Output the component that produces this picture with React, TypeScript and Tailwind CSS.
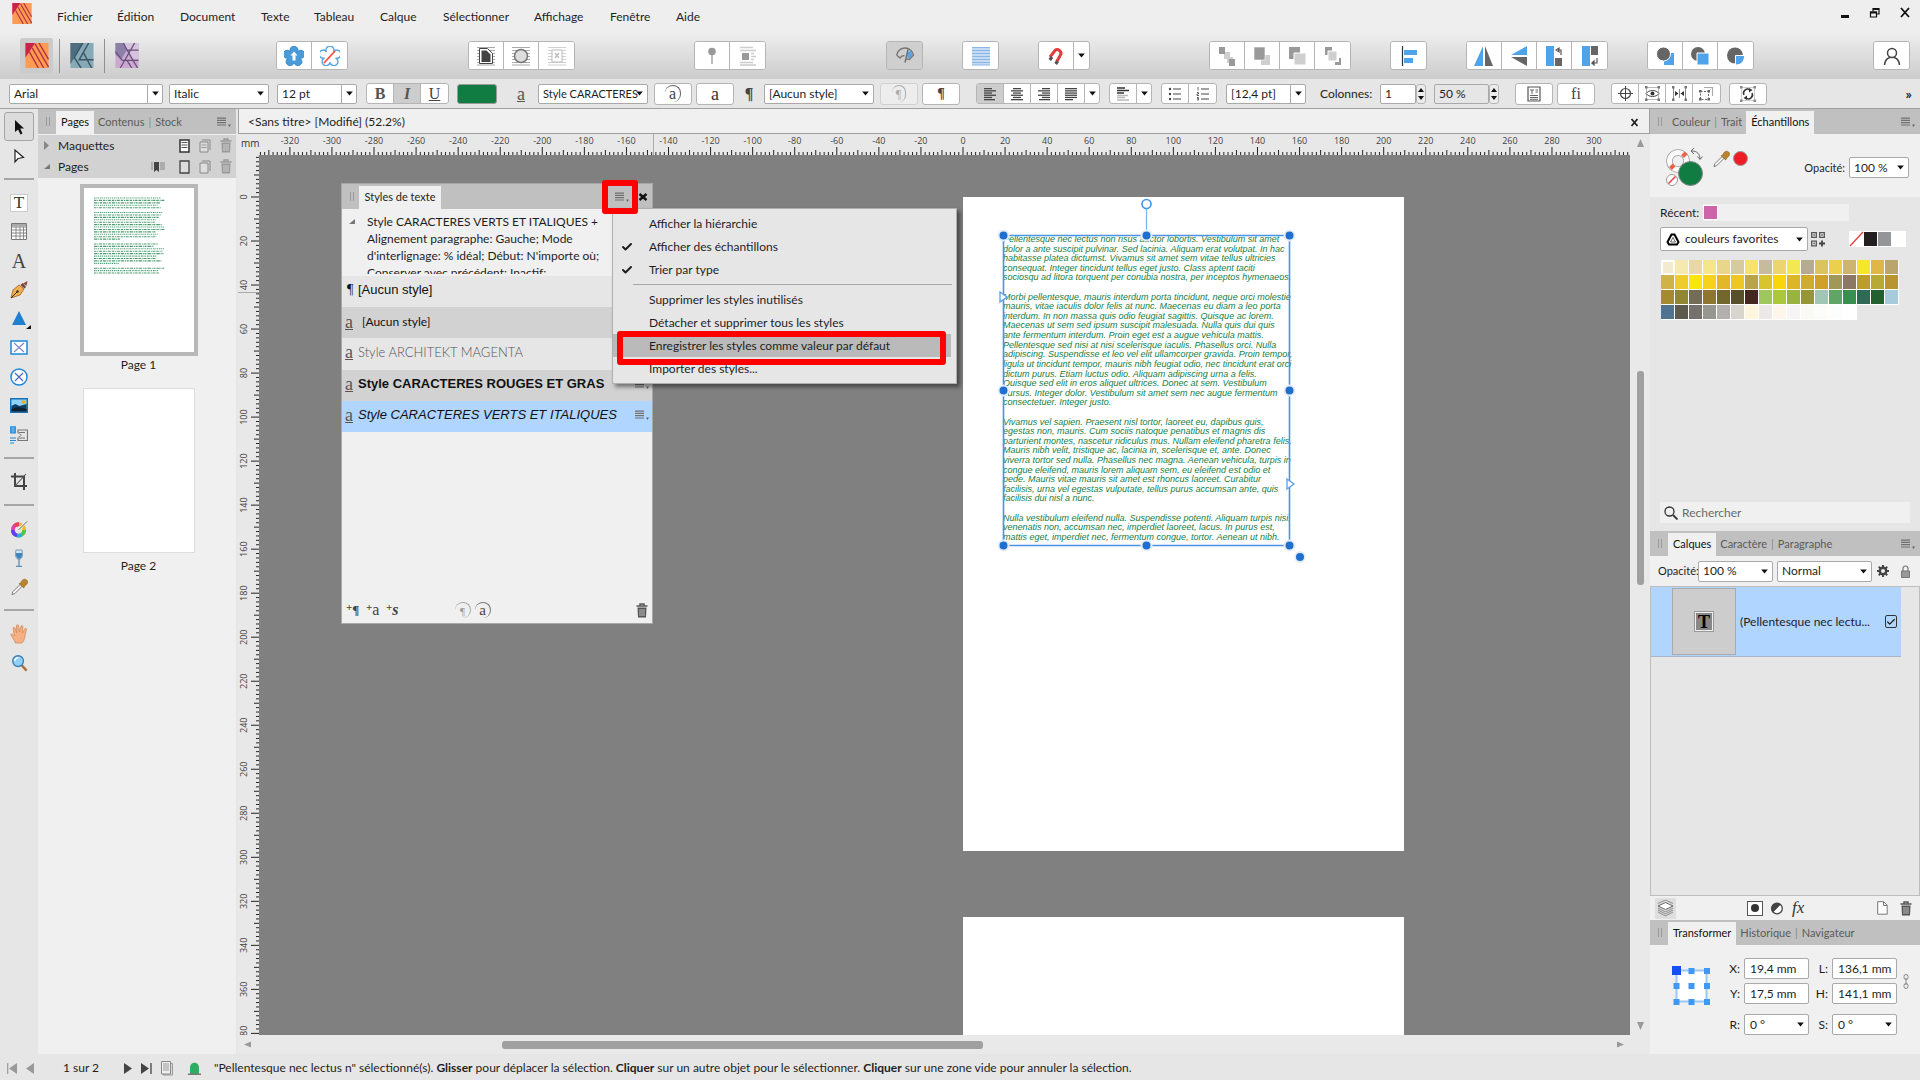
import type { ReactNode } from "react";
import { clsx } from "clsx";
import { Check } from "lucide-react";

const MENUS = [
  { label: "Fichier", width: "w-[60px]" },
  { label: "Édition", width: "w-[63px]" },
  { label: "Document", width: "w-[81px]" },
  { label: "Texte", width: "w-[53px]" },
  { label: "Tableau", width: "w-[66px]" },
  { label: "Calque", width: "w-[63px]" },
  { label: "Sélectionner", width: "w-[91px]" },
  { label: "Affichage", width: "w-[76px]" },
  { label: "Fenêtre", width: "w-[66px]" },
  { label: "Aide", width: "w-[40px]" },
];

const TEXT_LINES = [
  "Pellentesque nec lectus non risus auctor lobortis. Vestibulum sit amet",
  "dolor a ante suscipit pulvinar. Sed lacinia. Aliquam erat volutpat. In hac",
  "habitasse platea dictumst. Vivamus sit amet sem vitae tellus ultricies",
  "consequat. Integer tincidunt tellus eget justo. Class aptent taciti",
  "sociosqu ad litora torquent per conubia nostra, per inceptos hymenaeos.",
  "",
  "Morbi pellentesque, mauris interdum porta tincidunt, neque orci molestie",
  "mauris, vitae iaculis dolor felis at nunc. Maecenas eu diam a leo porta",
  "interdum. In non massa quis odio feugiat sagittis. Quisque ac lorem.",
  "Maecenas ut sem sed ipsum suscipit malesuada. Nulla quis dui quis",
  "ante fermentum interdum. Proin eget est a augue vehicula mattis.",
  "Pellentesque sed nisi at nisi scelerisque iaculis. Phasellus orci. Nulla",
  "adipiscing. Suspendisse et leo vel elit ullamcorper gravida. Proin tempor,",
  "ligula ut tincidunt tempor, mauris nibh feugiat odio, nec tincidunt erat orci",
  "dictum purus. Etiam luctus odio. Aliquam adipiscing urna a felis.",
  "Quisque sed elit in eros aliquet ultrices. Donec at sem. Vestibulum",
  "cursus. Integer dolor. Vestibulum sit amet sem nec augue fermentum",
  "consectetuer. Integer justo.",
  "",
  "Vivamus vel sapien. Praesent nisl tortor, laoreet eu, dapibus quis,",
  "egestas non, mauris. Cum sociis natoque penatibus et magnis dis",
  "parturient montes, nascetur ridiculus mus. Nullam eleifend pharetra felis.",
  "Mauris nibh velit, tristique ac, lacinia in, scelerisque et, ante. Donec",
  "viverra tortor sed nulla. Phasellus nec magna. Aenean vehicula, turpis in",
  "congue eleifend, mauris lorem aliquam sem, eu eleifend est odio et",
  "pede. Mauris vitae mauris sit amet est rhoncus laoreet. Curabitur",
  "facilisis, urna vel egestas vulputate, tellus purus accumsan ante, quis",
  "facilisis dui nisl a nunc.",
  "",
  "Nulla vestibulum eleifend nulla. Suspendisse potenti. Aliquam turpis nisi,",
  "venenatis non, accumsan nec, imperdiet laoreet, lacus. In purus est,",
  "mattis eget, imperdiet nec, fermentum congue, tortor. Aenean ut nibh.",
];

const SWATCHES = [
  "#f3ead0", "#f5e9b0", "#e8d8a8", "#f5e68c", "#ead68a", "#d6cb9e", "#f5e36c", "#c8ba9c", "#ecd56e", "#f4e850", "#b5ab90", "#dbc45e", "#ead04c", "#cdb570", "#f6e62c", "#dfb748", "#baa66c",
  "#d0b348", "#edcc2c", "#f8e60c", "#f6d21a", "#e2b728", "#edc722", "#b8a44a", "#d8c42c", "#f8d60c", "#dab628", "#d0ac2c", "#cfa02a", "#a09858", "#8c7664", "#ba9c30", "#b8a834", "#b8952e",
  "#a68a30", "#918632", "#746c54", "#8e7630", "#72682c", "#58502a", "#44281e", "#a0c75e", "#aac83a", "#98b33e", "#969638", "#a0c6b4", "#60a566", "#388f50", "#2e6a54", "#226030", "#a8cbdc",
  "#50748f", "#5c5a4c", "#76706c", "#969790", "#b4b0ae", "#d8d5d0", "#fbf6dc", "#ece8e8", "#fef6ea", "#f6f4f5", "#f9faf4", "#fdfcfa", "#fdfdfd", "#ffffff",
];

function Caret({ className }: { className?: string }) {
  return (
    <svg viewBox="0 0 8 6" className={clsx("h-[5px] w-[7px] shrink-0", className)} aria-hidden="true">
      <path d="M0 0.5h8L4 5.5z" fill="#111" />
    </svg>
  );
}

function Select({ label, value, className }: { label: string; value: string; className: string }) {
  return (
    <div className={clsx("relative flex items-center rounded-[2px] border border-[#a9a9a9] bg-white", className)}>
      <select aria-label={label} className="h-full w-full appearance-none truncate bg-transparent pl-1 outline-none">
        <option>{value}</option>
      </select>
      <Caret className="pointer-events-none absolute right-1" />
    </div>
  );
}

function Combo({ label, value, className }: { label: string; value: string; className: string }) {
  return (
    <div className={clsx("flex h-5 overflow-hidden rounded-[2px] border border-[#a9a9a9] bg-white", className)}>
      <input aria-label={label} defaultValue={value} className="min-w-0 flex-1 pl-1 outline-none" />
      <button aria-label={`${label} : liste`} className="flex w-[15px] items-center justify-center border-l border-[#a9a9a9]">
        <Caret />
      </button>
    </div>
  );
}

function Stepper({ label, value, muted }: { label: string; value: string; muted?: boolean }) {
  return (
    <div className="flex h-5">
      <input
        aria-label={label}
        defaultValue={value}
        className={clsx("rounded-[2px] border border-[#a9a9a9] pl-1 outline-none", muted ? "w-[55px] bg-[#e6e6e6]" : "w-9 bg-white")}
      />
      <button aria-label={`${label} : ajuster`} className="flex w-[10px] flex-col items-center justify-center gap-1 rounded-[3px] border border-[#b5b5b5] bg-[#ececec]">
        <svg viewBox="0 0 6 12" className="h-3 w-[6px]" aria-hidden="true">
          <path d="M0 4l3-4 3 4zM0 8l3 4 3-4z" fill="#111" />
        </svg>
      </button>
    </div>
  );
}

function Group({ children, className }: { children: ReactNode; className?: string }) {
  return (
    <div className={clsx("flex divide-x divide-[#b5b5b5] overflow-hidden rounded-[3px] border border-[#b5b5b5] bg-white", className)}>
      {children}
    </div>
  );
}

function BigButton({ label, active, children }: { label: string; active?: boolean; children: ReactNode }) {
  return (
    <button aria-label={label} className={clsx("flex h-[27px] w-[35px] items-center justify-center", active ? "bg-[#cfcfcf]" : "bg-white")}>
      {children}
    </button>
  );
}

function SmallButton({ label, active, children }: { label: string; active?: boolean; children: ReactNode }) {
  return (
    <button aria-label={label} className={clsx("flex h-[19px] w-[27px] items-center justify-center", active && "bg-[#cdcdcd]")}>
      {children}
    </button>
  );
}

function BoxButton({ label, faded, children }: { label: string; faded?: boolean; children: ReactNode }) {
  return (
    <button
      aria-label={label}
      className={clsx("flex h-[22px] w-[38px] items-center justify-center rounded-[3px] border", faded ? "border-[#d0d0d0] bg-[#ededed]" : "border-[#b5b5b5] bg-white")}
    >
      {children}
    </button>
  );
}

function Icon({ size = "h-5 w-5", box = "0 0 20 20", children }: { size?: string; box?: string; children: ReactNode }) {
  return (
    <svg viewBox={box} className={clsx("shrink-0", size)} fill="none" aria-hidden="true">
      {children}
    </svg>
  );
}

function PublisherLogo({ size }: { size: string }) {
  return (
    <Icon size={size} box="0 0 24 26">
      <path d="M0 0h24v26H0z" fill="#fd9a54" />
      <path d="M0 0h10L0 15z" fill="#c9234c" />
      <path d="M4 9l9.500 17M7 5l12 21M10 1l14 24M14 0l10 17" stroke="#b5313f" strokeWidth="1.400" />
    </Icon>
  );
}

function DesignerLogo() {
  return (
    <Icon size="h-[25px] w-6" box="0 0 24 26">
      <path d="M0 0h24v26H0z" fill="#86abb6" />
      <path d="M0 0h13L0 22z" fill="#4f6d80" />
      <path d="M13 0L4 15l7 11M19 0L9 17.500h15M13.500 10L22 26" stroke="#3c5665" strokeWidth="1.500" />
    </Icon>
  );
}

function PhotoLogo() {
  return (
    <Icon size="h-[25px] w-6" box="0 0 24 26">
      <path d="M0 0h24v26H0z" fill="#cba8d0" />
      <path d="M9 0h15v17l-6-1L12 7z" fill="#d6c3de" />
      <path d="M0 0h9l3 7-6 10-6-5z" fill="#8c7fa8" />
      <path d="M8 0l10 17.500L23 26M20 0L5 26M0 9l7 9h17M12 18l5 8M12 7.500h12" stroke="#65507a" strokeWidth="1.300" />
    </Icon>
  );
}

function PanelMenu() {
  return (
    <button aria-label="Menu du panneau" className="flex h-4 w-4 items-center justify-center">
      <Icon size="h-3 w-4" box="0 0 16 12">
        <path d="M1 1.500h9v1.200H1zM1 3.800h9V5H1zM1 6.100h9v1.200H1zM1 8.400h9v1.200H1z" fill="#707070" />
        <path d="M12 8.500h3l-1.500 2.500z" fill="#666" />
      </Icon>
    </button>
  );
}

function Grip() {
  return <span className="mb-2 ml-2 h-[9px] w-1 border-x border-[#9a9a9a]" />;
}

function PanelTabs({ tabs, active, menu = true }: { tabs: string[]; active: string; menu?: boolean }) {
  return (
    <div className="flex h-[25px] shrink-0 items-end bg-[#c0c0c0] text-[11px] text-[#5a5a5a]">
      <Grip />
      <div className="ml-[6px] flex h-[23px] flex-1">
        {tabs.map((tab, i) => (
          <div key={tab} className="flex items-center">
            {i > 0 && tab !== active && tabs[i - 1] !== active && <span className="pb-[2px] text-[#8a8a8a]">|</span>}
            <button className={clsx("h-full pb-[2px]", tab === active ? "bg-[#f0f0f0] px-[5px] text-[#111]" : "px-1")}>{tab}</button>
          </div>
        ))}
      </div>
      {menu && (
        <div className="mr-1 self-center">
          <PanelMenu />
        </div>
      )}
    </div>
  );
}

function TrashIcon({ color = "#555" }: { color?: string }) {
  return (
    <Icon size="h-[15px] w-3" box="0 0 12 15">
      <path d="M0.500 3h11M4 2.500V1h4v1.500" stroke={color} strokeWidth="1.400" />
      <path d="M1.500 4.500h9l-.5 10H2z" fill={color} />
      <path d="M4 6v7M6 6v7M8 6v7" stroke="#ddd" strokeWidth="0.8" />
    </Icon>
  );
}

function MenuBar() {
  return (
    <header className="flex h-[33px] shrink-0 items-center bg-[#eeeeee] pl-3">
      <div className="flex w-[45px] self-start pt-[3px]">
        <PublisherLogo size="h-[21px] w-5" />
      </div>
      <nav className="flex flex-1">
        {MENUS.map((m) => (
          <button key={m.label} className={clsx("text-left whitespace-nowrap", m.width)}>
            {m.label}
          </button>
        ))}
      </nav>
      <div className="flex gap-[18px] self-start pt-[7px] pr-[9px]">
        <button aria-label="Réduire">
          <Icon size="h-3 w-3" box="0 0 12 12"><path d="M2 8h8v3H2z" fill="#111" /></Icon>
        </button>
        <button aria-label="Restaurer">
          <Icon size="h-3 w-3" box="0 0 12 12">
            <path d="M4 4V1.500h6V7H8M1.500 5h6v5h-6z" stroke="#111" strokeWidth="1.200" />
            <path d="M4 1h6v2H4zM1 4.500h7v2H1z" fill="#111" />
          </Icon>
        </button>
        <button aria-label="Fermer">
          <Icon size="h-3 w-3" box="0 0 12 12"><path d="M2 1l8 9M10 1L2 10" stroke="#111" strokeWidth="1.800" /></Icon>
        </button>
      </div>
    </header>
  );
}

function ToolBar() {
  return (
    <div className="flex h-[46px] shrink-0 items-center bg-gradient-to-b from-[#eeeeee] to-[#cccccc] pr-[10px] pb-px pl-5">
      <button aria-label="Publisher" className="flex h-[35px] w-[33px] items-center justify-center rounded-[3px] bg-[#cbcbcb]">
        <PublisherLogo size="h-[25px] w-6" />
      </button>
      <span className="ml-[6px] h-[34px] w-px bg-[#909090]" />
      <button aria-label="Designer" className="mx-[10px]"><DesignerLogo /></button>
      <span className="h-[34px] w-px bg-[#909090]" />
      <button aria-label="Photo" className="ml-[10px]"><PhotoLogo /></button>

      <Group className="ml-[137px]">
        <BigButton label="Par défaut">
          <Icon>
            <path d="M6.500 6a4 4 0 1 1 7 0 4 4 0 1 1 2 6 4 4 0 1 1-5.500 4.500A4 4 0 1 1 4.500 12a4 4 0 1 1 2-6z" fill="#4a9bd8" stroke="#3f8fcf" />
            <path d="M10 5.500l3.500 4h-2v5h-3v-5h-2z" fill="#fff" />
          </Icon>
        </BigButton>
        <BigButton label="Rétablir">
          <Icon>
            <path d="M6.500 6a4 4 0 1 1 7 0 4 4 0 1 1 2 6 4 4 0 1 1-5.500 4.500A4 4 0 1 1 4.500 12a4 4 0 1 1 2-6z" fill="#fff" stroke="#5aa5da" strokeWidth="1.400" />
            <path d="M4 17L15 5" stroke="#f0503c" strokeWidth="1.800" />
          </Icon>
        </BigButton>
      </Group>

      <Group className="ml-[120px]">
        <BigButton label="Habillage du contour">
          <Icon>
            <path d="M1 1.500h18M1 4.500h18M1 7.500h18M1 10.500h18M1 13.500h18M1 16.500h18M1 19h18" stroke="#aaa" />
            <path d="M3.500 2.500h8l5 5v10h-13z" fill="#fff" stroke="#444" />
            <path d="M5.500 4.500h5l4 4V16h-9z" fill="#444" />
          </Icon>
        </BigButton>
        <BigButton label="Habillage ovale">
          <Icon>
            <path d="M1 1.500h18M1 4.500h18M1 7.500h18M1 10.500h18M1 13.500h18M1 16.500h18M1 19h18" stroke="#aaa" />
            <circle cx="10" cy="10" r="6.500" fill="#ddd" stroke="#777" strokeWidth="1.500" />
          </Icon>
        </BigButton>
        <BigButton label="Sans habillage">
          <Icon>
            <path d="M1 1.500h18M1 4.500h18M1 7.500h18M1 10.500h18M1 13.500h18M1 16.500h18M1 19h18" stroke="#d0d0d0" />
            <path d="M5 4h10v12H5z" fill="#fff" stroke="#bbb" />
            <path d="M8 7l4 5M12 7l-4 5" stroke="#bbb" strokeWidth="1.300" />
          </Icon>
        </BigButton>
      </Group>

      <Group className="ml-[119px]">
        <BigButton label="Épingler">
          <Icon>
            <circle cx="10" cy="5.500" r="3.800" fill="#999" />
            <path d="M10 9v9" stroke="#999" strokeWidth="1.300" />
          </Icon>
        </BigButton>
        <BigButton label="Incorporer au texte">
          <Icon>
            <path d="M2 1.500h13M2 4.500h16M13 7.500h3M13 10.500h5M13 13.500h3M2 16.500h13M2 19h16" stroke="#ccc" strokeWidth="1.300" />
            <path d="M4 7h7v7H4z" fill="#999" />
          </Icon>
        </BigButton>
      </Group>

      <Group className="ml-[120px]">
        <BigButton label="Aperçu" active>
          <Icon>
            <path d="M1.500 9C3 4 6.500 2 10 2s7 2 8.500 7l-4 4.500-3-.5M1.500 9l3.500 3c1-1.500 2.500-2.500 4.500-2.500" stroke="#777" strokeWidth="1.400" />
            <path d="M12 7l4-3 1.500 5-3 3.500-2-.5z" fill="#5ba3df" />
            <path d="M13 3.500l-3 13" stroke="#666" strokeWidth="1.300" />
          </Icon>
        </BigButton>
      </Group>
      <Group className="ml-[39px]">
        <BigButton label="Grille de ligne de base">
          <Icon>
            <path d="M1 1h18v18H1z" fill="#c5daf3" />
            <path d="M1 1.500h18M1 4.500h18M1 7.500h18M1 10.500h18M1 13.500h18M1 16.500h18M1 19h18" stroke="#8cb6e6" />
          </Icon>
        </BigButton>
      </Group>
      <Group className="ml-[39px]">
        <BigButton label="Magnétisme">
          <Icon>
            <path d="M4 11l5-6.500c2.500-2.500 7.500 1 5.500 4.500L10.500 16" stroke="#e8393c" strokeWidth="3" />
            <path d="M2.500 13l2.200-3 2.600 2-2.300 3zM8.500 17l1.700-2.700 2.800 1.700-2 3z" fill="#555" />
          </Icon>
        </BigButton>
        <button aria-label="Options de magnétisme" className="flex w-[15px] items-center justify-center"><Caret /></button>
      </Group>

      <Group className="ml-[119px]">
        <BigButton label="Mettre en arrière-plan">
          <Icon><path d="M7 6h6v5h3v6h-6v-4H7z" fill="#cfcfcf" /><path d="M2 1h6v7H2zM12 13h6v7h-6z" fill="#999" /></Icon>
        </BigButton>
        <BigButton label="Reculer">
          <Icon><path d="M9 9h9v10H9z" fill="#cfcfcf" /><path d="M2 1h11v13H2z" fill="#999" stroke="#fff" strokeWidth="0.6" /></Icon>
        </BigButton>
        <BigButton label="Avancer">
          <Icon><path d="M2 1h11v12H2z" fill="#999" /><path d="M7 7h12v12H7z" fill="#cfcfcf" stroke="#fff" /></Icon>
        </BigButton>
        <BigButton label="Mettre au premier plan">
          <Icon><path d="M2 1h7v4H6v4H2zM12 19h6v-7h-2v4h-4z" fill="#999" /><path d="M5 5h9v10H5z" fill="#cfcfcf" stroke="#fff" /></Icon>
        </BigButton>
      </Group>

      <Group className="ml-[39px]">
        <BigButton label="Aligner">
          <Icon><path d="M3.500 0v20" stroke="#333" strokeWidth="1.200" /><path d="M5 4h13v5H5zM5 12h9v5H5z" fill="#4fa3ea" /></Icon>
        </BigButton>
      </Group>

      <Group className="ml-[39px]">
        <BigButton label="Retourner horizontalement">
          <Icon><path d="M9 0v20H0z" fill="#4fa3ea" /><path d="M11 0v20h8z" fill="#666" /></Icon>
        </BigButton>
        <BigButton label="Retourner verticalement">
          <Icon><path d="M18 0v9H2z" fill="#4fa3ea" /><path d="M18 20v-9H2z" fill="#666" /></Icon>
        </BigButton>
        <BigButton label="Pivoter à gauche">
          <Icon><path d="M2 0h8v20H2z" fill="#4fa3ea" /><path d="M11 12h7v8h-7z" fill="#666" /><path d="M12 4l3-2v4zM14 4h3v5" stroke="#555" strokeWidth="1.200" /></Icon>
        </BigButton>
        <BigButton label="Pivoter à droite">
          <Icon><path d="M2 0h8v20H2z" fill="#4fa3ea" /><path d="M11 0h7v9h-7z" fill="#666" /><path d="M17 12v5h-5l2-2v4l-2-2" stroke="#555" strokeWidth="1.200" /></Icon>
        </BigButton>
      </Group>

      <Group className="ml-[39px]">
        <BigButton label="Ajouter">
          <Icon><path d="M9 7h10v12H9z" fill="#4fa3ea" /><circle cx="8.500" cy="8" r="7" fill="#666" stroke="#fff" /></Icon>
        </BigButton>
        <BigButton label="Soustraire">
          <Icon><circle cx="8" cy="8" r="7" fill="#666" /><path d="M7 7h12v12H7z" fill="#4fa3ea" stroke="#fff" /></Icon>
        </BigButton>
        <BigButton label="Intersection">
          <Icon><circle cx="9" cy="9.500" r="8" fill="#666" /><path d="M9.500 9.500h9c0 6-3 9.500-9 9.500z" fill="#4fa3ea" stroke="#fff" /></Icon>
        </BigButton>
      </Group>

      <Group className="ml-auto">
        <BigButton label="Mon compte">
          <Icon><circle cx="10" cy="7" r="4.500" stroke="#444" strokeWidth="1.500" /><path d="M2.500 19c.5-5 3-7 5.500-7.500M17.500 19c-.5-5-3-7-5.500-7.500" stroke="#444" strokeWidth="1.500" /></Icon>
        </BigButton>
      </Group>
    </div>
  );
}

function AlignIcon({ widths, center, right }: { widths: number[]; center?: boolean; right?: boolean }) {
  return (
    <Icon size="h-[14px] w-[14px]" box="0 0 14 14">
      {widths.map((w, i) => (
        <rect key={i} x={center ? 7 - w / 2 : right ? 13 - w : 1} y={1 + i * 2.2} width={w} height="1.3" fill="#444" />
      ))}
    </Icon>
  );
}

function Divider() {
  return <span className="h-[22px] w-px shrink-0 bg-[#8c8c8c]" />;
}

function ContextBar() {
  return (
    <div className="flex h-[30px] shrink-0 items-center border-b border-[#a0a0a0] bg-[#e6e6e6] pr-2 pl-[9px] whitespace-nowrap">
      <Combo label="Police" value="Arial" className="w-[154px]" />
      <Select label="Style de police" value="Italic" className="ml-[6px] h-5 w-[100px]" />
      <Combo label="Taille" value="12 pt" className="ml-2 w-20" />
      <Group className="ml-[9px]">
        <SmallButton label="Gras"><span className="font-['Liberation_Serif',serif] text-[16px] font-bold text-[#555]">B</span></SmallButton>
        <SmallButton label="Italique" active><span className="font-['Liberation_Serif',serif] text-[16px] font-bold text-[#555] italic">I</span></SmallButton>
        <SmallButton label="Souligné"><span className="font-['Liberation_Serif',serif] text-[16px] text-[#444] underline">U</span></SmallButton>
      </Group>
      <button aria-label="Couleur du texte" className="ml-2 h-5 w-10 rounded-[3px] border border-[#9a9a9a] bg-[#107c41]" />
      <div className="mx-2"><Divider /></div>
      <span className="w-[25px] pl-1 font-['Liberation_Serif',serif] text-[18px] leading-5 text-[#555] underline">a</span>
      <Select label="Style de caractère" value="Style CARACTERES" className="h-5 w-[110px] text-[11px]" />
      <div className="ml-[6px] flex gap-1">
        <BoxButton label="Actualiser le style de caractère">
          <span className="rounded-full border-t border-r border-[#666] px-1 font-['Liberation_Serif',serif] text-[16px] leading-4 text-[#444]">a</span>
        </BoxButton>
        <BoxButton label="Réinitialiser le style de caractère"><span className="font-['Liberation_Serif',serif] text-[18px] text-[#333]">a</span></BoxButton>
      </div>
      <span className="w-[30px] text-center font-['Liberation_Serif',serif] text-[16px] font-bold text-[#444]">¶</span>
      <Select label="Style de paragraphe" value="[Aucun style]" className="h-5 w-[110px]" />
      <div className="ml-[6px] flex gap-1">
        <BoxButton label="Actualiser le style de paragraphe" faded>
          <span className="rounded-full border-t border-r border-[#aaa] px-1 font-['Liberation_Serif',serif] text-[12px] leading-4 text-[#aaa]">¶</span>
        </BoxButton>
        <BoxButton label="Réinitialiser le style de paragraphe"><span className="font-['Liberation_Serif',serif] text-[14px] font-bold text-[#444]">¶</span></BoxButton>
      </div>
      <div className="mr-[10px] ml-[6px]"><Divider /></div>
      <Group>
        <SmallButton label="Aligner à gauche" active><AlignIcon widths={[8, 12, 8, 12, 8, 11]} /></SmallButton>
        <SmallButton label="Centrer"><AlignIcon widths={[8, 12, 8, 12, 8, 12]} center /></SmallButton>
        <SmallButton label="Aligner à droite"><AlignIcon widths={[8, 12, 8, 12, 8, 11]} right /></SmallButton>
        <SmallButton label="Justifier"><AlignIcon widths={[12, 12, 12, 12, 12, 8]} /></SmallButton>
        <button aria-label="Options de justification" className="flex w-[14px] items-center justify-center"><Caret /></button>
      </Group>
      <Group className="ml-[9px]">
        <SmallButton label="Alignement vertical">
          <Icon size="h-[14px] w-[14px]" box="0 0 14 14">
            <path d="M1 1h8M1 3.500h12M1 6h7" stroke="#333" strokeWidth="1.300" />
            <path d="M1 8.500h11M1 10.500h8M1 13h12" stroke="#bbb" strokeWidth="1.300" />
          </Icon>
        </SmallButton>
        <button aria-label="Options d'alignement" className="flex w-[14px] items-center justify-center"><Caret /></button>
      </Group>
      <Group className="ml-[9px]">
        <SmallButton label="Puces">
          <Icon size="h-[14px] w-[14px]" box="0 0 14 14">
            <path d="M5 2h8M5 7h8M5 12h8" stroke="#444" strokeWidth="1.200" />
            <circle cx="2" cy="2" r="1.200" fill="#444" /><circle cx="2" cy="7" r="1.200" fill="#444" /><circle cx="2" cy="12" r="1.200" fill="#444" />
          </Icon>
        </SmallButton>
        <SmallButton label="Numérotation">
          <Icon size="h-[14px] w-[14px]" box="0 0 14 14">
            <path d="M5 2h8M5 7h8M5 12h8" stroke="#444" strokeWidth="1.200" />
            <path d="M2 0v3.500M1 5.500h1.500v1.500H1v1.500h2M1 10.500h1.500V13H1M1 11.700h1.500" stroke="#444" strokeWidth="0.8" />
          </Icon>
        </SmallButton>
      </Group>
      <Combo label="Interlignage" value="[12,4 pt]" className="ml-[9px] w-20" />
      <div className="mx-[7px]"><Divider /></div>
      <span className="w-[60px]">Colonnes:</span>
      <Stepper label="Colonnes" value="1" />
      <span className="w-2" />
      <Stepper label="Gouttière" value="50 %" muted />
      <div className="mr-[7px] ml-[9px]"><Divider /></div>
      <div className="flex gap-1">
        <BoxButton label="Cadre de texte">
          <Icon size="h-4 w-[14px]" box="0 0 14 16">
            <path d="M1 1h12v14H1z" stroke="#555" strokeWidth="1.200" />
            <path d="M3 4h4M5 4v4M8.500 4H11M8.500 6H11M3 9.500h8M3 11.500h8M3 13.300h8" stroke="#666" />
          </Icon>
        </BoxButton>
        <BoxButton label="Typographie"><span className="font-['Liberation_Serif',serif] text-[16px] text-[#444]">fi</span></BoxButton>
      </div>
      <div className="mr-[10px] ml-[6px]"><Divider /></div>
      <Group>
        <SmallButton label="Origine">
          <Icon size="h-[15px] w-[15px]" box="0 0 15 15"><circle cx="7.500" cy="7.500" r="5" stroke="#444" strokeWidth="1.200" /><path d="M7.500 0v15M0 7.500h15" stroke="#444" /></Icon>
        </SmallButton>
        <SmallButton label="Masquer la sélection">
          <Icon size="h-[15px] w-[15px]" box="0 0 15 15"><path d="M1.500 1.500h12v12h-12z" stroke="#bbb" /><path d="M0 0h2.500v2.500H0zM12.500 0H15v2.500h-2.500zM0 12.500h2.500V15H0zM12.500 12.500H15V15h-2.500z" fill="#777" /><path d="M1 7.500C4 3.500 11 3.500 14 7.500c-3 4-10 4-13 0z" fill="#fff" stroke="#444" /><circle cx="7.500" cy="7.500" r="2" fill="#333" /></Icon>
        </SmallButton>
        <SmallButton label="Centrer la sélection">
          <Icon size="h-[15px] w-[15px]" box="0 0 15 15"><path d="M1.500 2v11M13.500 2v11M7.500 3v9" stroke="#888" /><path d="M0 0h2.500v2.500H0zM12.500 0H15v2.500h-2.500zM0 12.500h2.500V15H0zM12.500 12.500H15V15h-2.500z" fill="#777" /><path d="M3 5l3.500 2.500L3 10zM12 5L8.500 7.500 12 10z" fill="#333" /></Icon>
        </SmallButton>
        <SmallButton label="Transformer séparément">
          <Icon size="h-[15px] w-[15px]" box="0 0 15 15"><path d="M5 1.500h8.500V10" stroke="#aaa" strokeWidth="1.200" /><path d="M1.500 5.500h8v8h-8z" stroke="#666" strokeDasharray="2 1.500" /><path d="M0 4h2.500v2.500H0zM8.500 4H11v2.500H8.500zM0 12h2.500v2.500H0zM8.500 12H11v2.500H8.500z" fill="#666" /></Icon>
        </SmallButton>
      </Group>
      <div className="ml-2">
        <BoxButton label="Pivoter le cadre">
          <Icon size="h-4 w-4" box="0 0 16 16"><path d="M1.500 1.500h13v13h-13z" stroke="#ccc" /><path d="M0 0h2.500v2.500H0zM13.500 0H16v2.500h-2.500zM0 13.500h2.500V16H0zM13.500 13.500H16V16h-2.500z" fill="#888" /><path d="M4 9a4 4 0 0 1 6-5M12 7a4 4 0 0 1-6 5" stroke="#333" strokeWidth="1.500" /><path d="M9 2l3.500 2L9 6.500zM7 14l-3.500-2L7 9.500z" fill="#333" /></Icon>
        </BoxButton>
      </div>
      <button aria-label="Plus d'options" className="ml-auto text-[14px] font-bold">»</button>
    </div>
  );
}

function Dropper({ size = "h-[18px] w-[17px]" }: { size?: string }) {
  return (
    <Icon size={size} box="0 0 18 18">
      <path d="M1 17l1-3 8-8 2 2-8 8z" fill="#f5f5f5" stroke="#777" />
      <path d="M8.500 5.500l2-1C11 2 14-.5 16.500 1.500s.5 5-1.500 6l-1.500 2.500z" fill="#b9842d" stroke="#8a5c18" strokeWidth="0.600" />
    </Icon>
  );
}

const TOOLS: { label: string; icon: ReactNode; gap?: boolean }[] = [
  {
    label: "Déplacement",
    icon: <Icon size="h-4 w-3" box="0 0 12 16"><path d="M2 1v12l3-2.500 2.500 5 2-1-2.300-5H11z" fill="#111" /></Icon>,
  },
  {
    label: "Nœud",
    icon: <Icon size="h-4 w-3" box="0 0 12 16"><path d="M2 2v12l3-3.500 5.500-1z" fill="#fff" stroke="#222" strokeWidth="1.200" /></Icon>,
  },
  {
    label: "Texte cadré",
    gap: true,
    icon: <span className="flex h-[18px] w-[18px] items-center justify-center border border-[#ccc] bg-white font-['Liberation_Serif',serif] text-[17px] text-[#333]">T</span>,
  },
  {
    label: "Tableau",
    icon: <Icon size="h-[17px] w-4" box="0 0 16 17"><path d="M.5.5h15v16H.5z" fill="#fff" stroke="#777" /><path d="M1 1h14v2.500H1z" fill="#aaa" /><path d="M5 4v12.500M9 4v12.500M12.500 4v12.500M1 4h14M1 7h14M1 10h14M1 13h14" stroke="#888" /></Icon>,
  },
  { label: "Texte artistique", icon: <span className="font-['Liberation_Serif',serif] text-[20px] text-[#444]">A</span> },
  {
    label: "Plume",
    icon: <Icon size="h-[18px] w-[18px]" box="0 0 18 18"><path d="M1 17l2-8 6-5 5 4-4 6z" fill="#f2b050" stroke="#9c5a16" strokeWidth="0.800" /><path d="M1 17l6-6" stroke="#4a2a10" /><circle cx="7.500" cy="10.500" r="1.200" fill="#333" /><path d="M10.500 4l4 3.500L16 6l-3.500-4z" fill="#6a4038" /><path d="M13 2.500L17.500 0 16.500 5z" fill="#8e4a3c" /></Icon>,
  },
  {
    label: "Triangle",
    icon: <Icon size="h-5 w-6" box="0 0 24 20"><path d="M12 2l7 14H5z" fill="#1f7fd0" /><path d="M24 16v4h-5z" fill="#111" /></Icon>,
  },
  {
    label: "Cadre d'image rectangulaire",
    icon: <Icon size="h-[15px] w-[18px]" box="0 0 18 15"><path d="M1 1h16v13H1z" fill="#fff" stroke="#1e88d8" strokeWidth="1.500" /><path d="M4 3l10 9M14 3L4 12" stroke="#7a86c8" strokeWidth="1.100" /></Icon>,
  },
  {
    label: "Cadre d'image elliptique",
    icon: <Icon size="h-[18px] w-[18px]" box="0 0 18 18"><circle cx="9" cy="9" r="8" fill="#fff" stroke="#1e88d8" strokeWidth="1.500" /><path d="M5 5l8 8M13 5l-8 8" stroke="#4a66b8" strokeWidth="1.100" /></Icon>,
  },
  {
    label: "Placer une image",
    icon: <Icon size="h-[15px] w-[18px]" box="0 0 18 15"><path d="M.7.7h16.600v13.600H.7z" fill="#8fd0f5" stroke="#1271b8" strokeWidth="1.400" /><path d="M1.400 8l4-2 4 2 7.200-2v7.600H1.400z" fill="#123e66" /><path d="M1.400 11l6-2 9.200 2v2.600H1.400z" fill="#0c2233" /><circle cx="13.500" cy="4" r="1.800" fill="#f5a623" /></Icon>,
  },
  {
    label: "Publipostage",
    icon: <Icon size="h-[18px] w-[18px]" box="0 0 18 18"><path d="M.8.800h4.400v6H.8z" fill="#9fd0f5" stroke="#1e88d8" strokeWidth="1.300" /><path d="M1 3h4M1 5h4M0 12h6M0 14.500h6M0 17h4" stroke="#1e88d8" strokeWidth="1.200" /><path d="M8 7V4h9.500v10.500H8v-3M9 6.500h6M9 12h6" stroke="#777" strokeWidth="1.200" /><path d="M8 7l3.500 2.200L8 11.500" stroke="#999" /></Icon>,
  },
  {
    label: "Recadrage",
    gap: true,
    icon: <Icon size="h-[17px] w-4" box="0 0 16 17"><path d="M4 0v13h12M0 3.500h13V17" stroke="#444" strokeWidth="2" /><path d="M4 13L15 1" stroke="#555" strokeWidth="1.100" /></Icon>,
  },
  {
    label: "Dégradé",
    gap: true,
    icon: <Icon size="h-[18px] w-[17px]" box="0 0 18 18"><circle cx="8" cy="10" r="6" stroke="#e8c020" strokeWidth="4" /><path d="M8 4a6 6 0 0 0-6 6" stroke="#e040b0" strokeWidth="4" /><path d="M2 10a6 6 0 0 0 4.500 5.800" stroke="#6040f0" strokeWidth="4" /><path d="M6.500 15.800a6 6 0 0 0 5-1" stroke="#20b0d8" strokeWidth="4" /><path d="M11.500 14.800A6 6 0 0 0 14 10" stroke="#50c840" strokeWidth="4" /><path d="M4 5.500A6 6 0 0 1 8.500 4" stroke="#f03c60" strokeWidth="4" /><path d="M8 10l8-8.500" stroke="#f4f4f4" strokeWidth="2.500" /><path d="M8 10l9-9" stroke="#555" /></Icon>,
  },
  {
    label: "Transparence",
    icon: <Icon size="h-[18px] w-3" box="0 0 12 18"><path d="M3 1h6c1 5 .5 9-3 9.500C2.500 10 2 6 3 1z" fill="#cfe4f5" stroke="#7a98b0" /><path d="M3 4h6c.3 3-.5 5.500-3 6-2.500-.5-3.300-3-3-6z" fill="#3f86bd" /><path d="M6 10.500V17M3 17.300h6" stroke="#5e8fb5" strokeWidth="1.300" /></Icon>,
  },
  { label: "Pipette", icon: <Dropper /> },
  {
    label: "Panoramique",
    gap: true,
    icon: <Icon size="h-5 w-[18px]" box="0 0 18 20"><path d="M5.500 19C4 15 1 12 .800 10.500c1-1 2.500 0 3.700 1.500L3 4c.5-1 1.500-1 2 0l1.700 5L6.500 1.500c.5-1 1.800-1 2 0L9.500 8l1.500-6c.7-.8 1.700-.5 1.800.5L12.500 9l2.500-4.500c.9-.5 1.600 0 1.500 1L14.500 14c-.5 3-2 5-3 5z" fill="#f5b183" stroke="#cf8350" strokeWidth="0.700" /></Icon>,
  },
  {
    label: "Zoom",
    icon: <Icon size="h-[18px] w-[17px]" box="0 0 18 18"><path d="M11 11l5.500 6" stroke="#b06f3a" strokeWidth="2.600" /><circle cx="7.500" cy="7" r="5.700" fill="#8fd0fa" stroke="#3a7fb5" strokeWidth="1.400" /><path d="M4 7a3.500 3.500 0 0 1 4-3.500" stroke="#fff" strokeWidth="1.500" /></Icon>,
  },
];

function ToolPalette() {
  return (
    <aside className="flex w-[38px] shrink-0 flex-col items-center bg-[#e6e6e6] pt-[3px]">
      {TOOLS.map((tool, i) => (
        <div key={tool.label} className="flex w-full flex-col items-center">
          {tool.gap && <span className="my-2 h-[2px] w-[30px] bg-[#a6a6a6]" />}
          <button
            aria-label={tool.label}
            className={clsx("flex h-[29px] w-[30px] items-center justify-center", i === 0 && "rounded-[3px] border border-[#a5a5a5] bg-[#dcdcdc]")}
          >
            {tool.icon}
          </button>
        </div>
      ))}
    </aside>
  );
}

function PagesPanel() {
  return (
    <aside className="flex w-[198px] shrink-0 flex-col bg-[#f0f0f0]">
      <PanelTabs tabs={["Pages", "Contenus", "Stock"]} active="Pages" />
      <div className="mt-px flex h-[43px] flex-col bg-[#d2d2d2] pr-1 pb-px">
        <div className="flex flex-1 items-center">
          <Icon size="mx-[5px] h-[9px] w-[9px]" box="0 0 9 9"><path d="M1 0l5 4.500L1 9z" fill="#888" /></Icon>
          <span className="ml-px flex-1">Maquettes</span>
          <Icon size="h-[14px] w-[11px]" box="0 0 11 14"><path d="M1 1h9v12H1z" fill="#fff" stroke="#333" strokeWidth="1.500" /><path d="M2.500 3.500h6M2.500 6h6M2.500 8.500h6" stroke="#555" /></Icon>
          <Icon size="mx-[9px] h-[14px] w-3" box="0 0 12 14"><path d="M3 1h8v10" stroke="#888" /><path d="M1 3h8v10H1z" fill="#ddd" stroke="#888" /><path d="M2.500 6h5M2.500 8.500h5" stroke="#999" /></Icon>
          <TrashIcon color="#999" />
        </div>
        <div className="flex flex-1 items-center">
          <Icon size="mx-[5px] h-[9px] w-[9px]" box="0 0 9 9"><path d="M7 2v5H1z" fill="#777" /></Icon>
          <span className="ml-px flex-1">Pages</span>
          <Icon size="mr-[14px] h-[10px] w-[14px]" box="0 0 14 10"><path d="M3 0h5v10L5.500 8 3 10z" fill="#444" /><path d="M0 1h2M0 3h2M0 5h2M0 7h2M9 1h5M9 3h5M9 5h5M9 7h5" stroke="#888" /></Icon>
          <Icon size="h-[14px] w-[11px]" box="0 0 11 14"><path d="M1 1h9v12H1z" fill="#ddd" stroke="#444" strokeWidth="1.300" /></Icon>
          <Icon size="mx-[9px] h-[14px] w-3" box="0 0 12 14"><path d="M3 1h8v10" stroke="#888" /><path d="M1 3h8v10H1z" fill="#ddd" stroke="#888" /></Icon>
          <TrashIcon color="#999" />
        </div>
      </div>
      <div className="flex flex-col items-center pt-[6px] pl-[3px] text-center">
        <div className="h-[172px] w-[118px] border-4 border-[#b8b8b8] bg-white pt-[9px] pl-[10px]">
          <svg viewBox="0 0 71 78" className="h-[78px] w-[71px]" aria-hidden="true">
            {TEXT_LINES.map((line, i) => (
              <path
                key={i}
                d={`M0 ${i * 2.42 + 1}h${line.length * 0.95}`}
                stroke="#107c41"
                strokeOpacity="0.75"
                strokeWidth="1.1"
                strokeDasharray={`${(i % 3) + 1.5} 0.8 1 0.7 ${((i * 2) % 3) + 1} 0.9`}
              />
            ))}
          </svg>
        </div>
        <span className="leading-[18px]">Page 1</span>
        <div className="mt-[14px] h-[165px] w-28 border border-[#ddd] bg-white" />
        <span className="mt-1 leading-[18px]">Page 2</span>
      </div>
    </aside>
  );
}

const MM_X = 42.07 / 20;
const MM_Y = 44.02 / 20;

function range(from: number, to: number, step: number) {
  const out: number[] = [];
  for (let v = from; v <= to; v += step) out.push(v);
  return out;
}

function HorizontalRuler() {
  return (
    <svg className="h-[21px] w-full bg-[#e8e8e8] font-['Open_Sans',sans-serif]" aria-hidden="true">
      <text x="3" y="13" fontSize="10" fill="#333">mm</text>
      {range(-334, 316, 2).map((mm) => {
        const x = 725 + mm * MM_X;
        const major = mm % 20 === 0;
        return (
          <g key={mm}>
            <path d={`M${x} ${major ? 13 : mm % 10 === 0 ? 16 : 18}V21`} stroke="#222" strokeWidth="1" />
            {major && <text x={x} y="10" fontSize="9" textAnchor="middle" fill="#444">{mm}</text>}
          </g>
        );
      })}
      <path d="M415.500 0v21" stroke="#aaa" />
    </svg>
  );
}

function VerticalRuler() {
  return (
    <svg className="h-full w-[21px] shrink-0 bg-[#e8e8e8] font-['Open_Sans',sans-serif]" aria-hidden="true">
      {range(-18, 380, 2).map((mm) => {
        const y = 42 + mm * MM_Y;
        const major = mm % 20 === 0;
        return (
          <g key={mm}>
            <path d={`M${major ? 13 : mm % 10 === 0 ? 16 : 18} ${y}H21`} stroke="#222" strokeWidth="1" />
            {major && (
              <text transform={`translate(9 ${y}) rotate(-90)`} fontSize="9" textAnchor="middle" fill="#444">{mm}</text>
            )}
          </g>
        );
      })}
      <path d="M0 137.500h21" stroke="#aaa" />
    </svg>
  );
}

function Handle({ x, y }: { x: number; y: number }) {
  return <circle cx={x} cy={y} r="5" fill="#1f6fd0" stroke="#e8edf5" strokeWidth="2" />;
}

function TextFrame() {
  return (
    <div className="absolute top-20 left-[744px] h-[311px] w-[287px]">
      <div className="flex h-[307px] flex-col justify-between font-['Liberation_Sans',Arial,sans-serif] text-[9px] leading-[9px] whitespace-nowrap text-[#158045] italic">
        {TEXT_LINES.map((line, i) => (
          <p key={i} className="h-[9px]">{line}</p>
        ))}
      </div>
      <svg viewBox="-10 -40 320 370" className="pointer-events-none absolute -top-10 -left-[10px] h-[370px] w-[320px]" aria-hidden="true">
        <path d="M0.500 0.500h286v310h-286z" fill="none" stroke="#4b93e6" strokeWidth="1.600" />
        <path d="M143.500 0v-26" stroke="#7db3f0" strokeWidth="1.300" />
        <circle cx="143.500" cy="-31" r="4.500" fill="#fff" stroke="#4b93e6" strokeWidth="1.700" />
        <path d="M-3 57l7 5-7 5zM284 244l7 5-7 5z" fill="#fff" stroke="#5b9dea" strokeWidth="1.300" />
        <Handle x={0.5} y={0.5} /><Handle x={143.5} y={0.5} /><Handle x={286.5} y={0.5} />
        <Handle x={0.5} y={155.5} /><Handle x={286.5} y={155.5} />
        <Handle x={0.5} y={310.5} /><Handle x={143.5} y={310.5} /><Handle x={286.5} y={310.5} />
        <Handle x={297} y={322} />
      </svg>
    </div>
  );
}

function CharA() {
  return <span className="w-[13px] shrink-0 font-['Liberation_Serif',serif] text-[18px] leading-5 font-normal text-[#555] not-italic underline">a</span>;
}

function TextStylesPanel() {
  return (
    <section className="absolute top-7 left-[82px] flex h-[441px] w-[312px] flex-col border border-[#a8a8a8] bg-[#f0f0f0]">
      <div className="flex h-[25px] shrink-0 items-end bg-[#c0c0c0]">
        <Grip />
        <span className="ml-[5px] flex h-[23px] w-[82px] items-center justify-center bg-[#f0f0f0] pb-px text-[11px] whitespace-nowrap">Styles de texte</span>
        <div className="ml-auto flex items-center gap-2 self-center pr-1">
          <PanelMenu />
          <button aria-label="Fermer le panneau">
            <Icon size="h-[10px] w-[10px]" box="0 0 10 10"><path d="M1.500 2l7 6M8.500 2l-7 6" stroke="#111" strokeWidth="2.400" /></Icon>
          </button>
        </div>
      </div>
      <div className="flex h-[67px] shrink-0 overflow-hidden pb-[2px]">
        <Icon size="mt-2 ml-[6px] h-[9px] w-[9px]" box="0 0 9 9"><path d="M7 2v5H1z" fill="#777" /></Icon>
        <p className="ml-[10px] h-[65px] overflow-hidden pt-1 leading-[17px] whitespace-nowrap">
          Style CARACTERES VERTS ET ITALIQUES +<br />
          Alignement paragraphe: Gauche; Mode<br />
          d'interlignage: % idéal; Début: N'importe où;<br />
          Conserver avec précédent: Inactif;
        </p>
      </div>
      <ul className="grid h-[156px] shrink-0 grid-rows-5 font-['Liberation_Sans',Arial,sans-serif] text-[13px] whitespace-nowrap text-[#111]">
        <li className="flex items-center bg-[#e6e6e6] pb-[3px] pl-[5px]"><span className="w-[11px] font-['Liberation_Serif',serif] text-[14px]">¶</span>[Aucun style]</li>
        <li className="flex items-center bg-[#d2d2d2] pb-px pl-[3px] font-['Lato',sans-serif] text-[12px]"><CharA /><span className="pl-1">[Aucun style]</span></li>
        <li className="flex items-center bg-[#e6e6e6] pb-[3px] pl-[3px] font-['Lato',sans-serif] text-[13px] font-light text-[#555]"><CharA />Style ARCHITEKT MAGENTA</li>
        <li className="flex items-center bg-[#d2d2d2] pr-[2px] pb-[3px] pl-[3px] font-bold"><CharA /><span className="flex-1">Style CARACTERES ROUGES ET GRAS</span><PanelMenu /></li>
        <li className="flex items-center bg-[#b0d5ff] pr-[2px] pb-[3px] pl-[3px] italic"><CharA /><span className="flex-1">Style CARACTERES VERTS ET ITALIQUES</span><PanelMenu /></li>
      </ul>
      <div className="mt-auto flex h-[26px] items-center px-1 font-['Liberation_Serif',serif] text-[#444]">
        <button aria-label="Créer un style de paragraphe" className="flex w-5 items-end text-[13px] leading-4 font-bold"><span className="self-start text-[11px] leading-[10px]">+</span>¶</button>
        <button aria-label="Créer un style de caractère" className="flex w-5 items-end text-[16px] leading-4"><span className="self-start text-[11px] leading-[10px] font-bold">+</span>a</button>
        <button aria-label="Créer un style de groupe" className="flex w-5 items-end text-[16px] leading-4 font-bold italic"><span className="self-start text-[11px] leading-[10px] not-italic">+</span>s</button>
        <button aria-label="Actualiser le paragraphe" className="ml-[49px] h-4 w-4 rounded-full border-t border-r border-[#aaa] text-[11px] leading-[14px] text-[#999]">¶</button>
        <button aria-label="Actualiser le caractère" className="ml-1 h-4 w-4 rounded-full border-t border-r border-[#777] text-[15px] leading-[13px]">a</button>
        <button aria-label="Supprimer le style" className="ml-auto"><TrashIcon /></button>
      </div>
    </section>
  );
}

const MENU_ITEMS = [
  { label: "Afficher la hiérarchie" },
  { label: "Afficher des échantillons", checked: true },
  { label: "Trier par type", checked: true },
  { label: "Supprimer les styles inutilisés", separator: true },
  { label: "Détacher et supprimer tous les styles" },
  { label: "Enregistrer les styles comme valeur par défaut", active: true },
  { label: "Importer des styles..." },
];

function StylesMenu() {
  return (
    <div role="menu" className="absolute top-[53px] left-[353px] flex w-[345px] flex-col border border-[#b0b0b0] bg-[#e6e6e6] py-[3px] shadow-[3px_3px_4px_rgba(0,0,0,0.45)]">
      {MENU_ITEMS.map((item) => (
        <div key={item.label} className="flex flex-col">
          {item.separator && <span className="my-[3px] mr-1 ml-5 h-px bg-[#a8a8a8]" />}
          <button role="menuitem" className={clsx("mr-[5px] flex h-[23px] items-center text-left", item.active && "bg-[#bababa]")}>
            <span className="flex w-9 pl-2">{item.checked && <Check className="h-3 w-3" strokeWidth={4} />}</span>
            {item.label}
          </button>
        </div>
      ))}
    </div>
  );
}

function DocumentArea() {
  return (
    <main className="ml-[2px] flex min-w-0 flex-1 flex-col bg-[#e8e8e8]">
      <div className="flex h-[25px] shrink-0 items-center justify-between border border-t-0 border-[#a0a0a0] bg-[#f0f0f0] pt-[2px] pr-[10px] pl-[9px]">
        <span>&lt;Sans titre&gt; [Modifié] (52.2%)</span>
        <button aria-label="Fermer le document">
          <Icon size="h-[9px] w-[9px]" box="0 0 9 9"><path d="M1.500 1l6 7M7.500 1l-6 7" stroke="#222" strokeWidth="1.800" /></Icon>
        </button>
      </div>
      <div className="flex min-h-0 flex-1">
        <div className="flex min-w-0 flex-1 flex-col">
          <HorizontalRuler />
          <div className="flex min-h-0 flex-1">
            <VerticalRuler />
            <div className="relative flex-1 overflow-hidden bg-[#808080]">
              <div className="absolute top-[42px] left-[704px] h-[654px] w-[441px] bg-white" />
              <div className="absolute top-[762px] left-[704px] h-[654px] w-[441px] bg-white" />
              <TextFrame />
              <TextStylesPanel />
              <StylesMenu />
              <div className="absolute top-[25px] left-[343px] h-[34px] w-9 rounded-[3px] border-[6px] border-[#ff0000]" />
              <div className="absolute top-[176px] left-[358px] h-[34px] w-[329px] rounded-[3px] border-[6px] border-[#ff0000]" />
            </div>
          </div>
        </div>
        <div className="flex w-5 shrink-0 flex-col items-center bg-[#e9e9e9] py-[5px]">
          <Icon size="h-2 w-[7px]" box="0 0 7 8"><path d="M3.500 0L7 8H0z" fill="#999" /></Icon>
          <div className="flex w-full flex-1 flex-col items-center">
            <span className="h-[224px]" />
            <span className="h-[214px] w-[7px] rounded-[3px] bg-[#a0a0a0]" />
          </div>
          <Icon size="h-2 w-[7px]" box="0 0 7 8"><path d="M3.500 8L0 0h7z" fill="#999" /></Icon>
        </div>
      </div>
      <div className="flex h-[19px] shrink-0 items-center bg-[#e9e9e9] pr-[26px] pl-[6px]">
        <Icon size="h-[7px] w-[7px]" box="0 0 8 7"><path d="M0 3.500L8 0v7z" fill="#999" /></Icon>
        <div className="flex flex-1 pl-[251px]">
          <span className="h-2 w-[481px] rounded-[3px] bg-[#a0a0a0]" />
        </div>
        <Icon size="h-[7px] w-[7px]" box="0 0 8 7"><path d="M8 3.500L0 0v7z" fill="#999" /></Icon>
      </div>
    </main>
  );
}

function SwatchesPanel() {
  return (
    <section className="flex flex-1 flex-col">
      <PanelTabs tabs={["Couleur", "Trait", "Échantillons"]} active="Échantillons" />
      <div className="flex h-[63px] shrink-0 items-center bg-[#f0f0f0] pt-1 pr-[11px] pl-4">
        <Icon size="h-[39px] w-[37px]" box="0 0 37 39">
          <circle cx="12" cy="13" r="8.500" stroke="#999" strokeWidth="6.500" />
          <circle cx="12" cy="13" r="8.500" stroke="#fafafa" strokeWidth="5" />
          <path d="M16.500 8.500l3.500-3.500M4.500 20.500l3.500-3.500" stroke="#f0604a" strokeWidth="4" />
          <circle cx="6" cy="32" r="5.500" fill="#fff" stroke="#999" /><path d="M2.500 35.500l7-7" stroke="#e8393c" strokeWidth="1.500" />
          <circle cx="24.500" cy="25.500" r="12" fill="#107c41" stroke="#888" />
          <path d="M26 3c5 0 8 3 8 8M28 0l-3 3 3 3M31.500 8.500l2.500 3 2.500-3" stroke="#666" />
        </Icon>
        <div className="ml-[10px] self-start pt-3"><Dropper /></div>
        <span className="mt-[13px] ml-[3px] h-[15px] w-[15px] self-start rounded-full border border-[#999] bg-[#ee1c24]" />
        <span className="mr-1 ml-auto text-[11px]">Opacité:</span>
        <Select label="Opacité" value="100 %" className="h-[21px] w-[60px]" />
      </div>
      <div className="flex min-h-0 flex-1 flex-col bg-[#e6e6e6] px-[10px] pt-[7px]">
        <div className="flex h-[17px] items-center">
          <span className="w-[43px]">Récent:</span>
          <div className="flex h-[17px] w-[146px] items-center bg-[#f0f0f0]">
            <button aria-label="Magenta" className="h-[15px] w-[15px] border border-white bg-[#cc66a8]" />
          </div>
        </div>
        <div className="mt-[6px] flex h-6 items-center">
          <div className="relative flex h-6 w-[148px] items-center rounded-[2px] border border-[#a9a9a9] bg-white">
            <select aria-label="Palette" className="h-full w-full appearance-none bg-transparent pl-6 outline-none"><option>couleurs favorites</option></select>
            <svg viewBox="0 0 14 13" className="pointer-events-none absolute left-[5px] h-[13px] w-[14px]" fill="none" aria-hidden="true">
              <path d="M5.500 1.500h3l4 7.500-1.500 2.500H3L1.500 9z" stroke="#000" strokeWidth="2" /><path d="M7 4.500l2.500 4.500h-5z" fill="#fff" stroke="#000" strokeWidth="0.600" />
            </svg>
            <Caret className="pointer-events-none absolute right-1" />
          </div>
          <button aria-label="Vue de la palette" className="ml-[3px]">
            <Icon size="h-[15px] w-[14px]" box="0 0 14 15"><path d="M.7.7h4.600v4.600H.7zM8.700.7h4.600v4.600H8.700zM.7 9.200h4.600v4.600H.7z" stroke="#555" strokeWidth="1.300" /><path d="M2.300 2.300h1.500v1.500H2.300zM10.300 2.300h1.500v1.500h-1.500zM2.300 10.800h1.500v1.500H2.300z" fill="#555" /><path d="M11 8.500v6M8 11.500h6" stroke="#444" strokeWidth="1.800" /></Icon>
          </button>
          <div className="ml-auto flex h-4 w-[61px] items-center">
            <div className="flex h-4 w-[57px] items-center bg-white">
              <svg viewBox="0 0 15 16" className="h-4 w-[15px]" aria-hidden="true"><path d="M1 15L14 1" stroke="#e8393c" strokeWidth="1.300" /></svg>
              <span className="h-[14px] w-[13px] bg-[#231f20]" />
              <span className="ml-px h-[14px] w-[13px] bg-[#939598]" />
            </div>
          </div>
        </div>
        <div className="mt-[9px] flex w-[239px] flex-wrap pl-px">
          {SWATCHES.map((color, i) => (
            <button
              key={i}
              aria-label={`Échantillon ${i + 1}`}
              className={clsx("h-[15px] w-[14px] border-white", i === 0 ? "border-2" : "border-r border-b")}
              style={{ backgroundColor: color }}
            />
          ))}
        </div>
        <label className="mt-auto mb-2 flex h-[21px] items-center gap-1 bg-[#f0f0f0] pl-1">
          <Icon size="h-[14px] w-[14px]" box="0 0 14 14"><circle cx="5.500" cy="5.500" r="4.500" stroke="#333" strokeWidth="1.300" /><path d="M9 9l4.500 4.500" stroke="#333" strokeWidth="1.800" /></Icon>
          <input aria-label="Rechercher" placeholder="Rechercher" className="w-full bg-transparent outline-none placeholder:text-[#6a6a6a]" />
        </label>
      </div>
    </section>
  );
}

function LayersPanel() {
  return (
    <section className="flex h-[389px] shrink-0 flex-col">
      <PanelTabs tabs={["Calques", "Caractère", "Paragraphe"]} active="Calques" />
      <div className="flex h-[30px] shrink-0 items-center bg-[#f0f0f0] pl-2">
        <span className="w-10 text-[11px]">Opacité:</span>
        <Select label="Opacité du calque" value="100 %" className="h-[21px] w-[75px]" />
        <Select label="Mode de fusion" value="Normal" className="ml-1 h-[21px] w-[95px]" />
        <button aria-label="Options du calque" className="ml-[5px]">
          <Icon size="h-3 w-3" box="0 0 12 12"><circle cx="6" cy="6" r="3.200" stroke="#444" strokeWidth="2.400" /><path d="M6 0v2.500M6 9.500V12M0 6h2.500M9.500 6H12M1.800 1.800l1.700 1.700M8.500 8.500l1.700 1.700M10.200 1.800L8.500 3.500M3.500 8.500l-1.700 1.700" stroke="#444" strokeWidth="2" /></Icon>
        </button>
        <button aria-label="Verrouiller" className="ml-3">
          <Icon size="h-[13px] w-[9px]" box="0 0 9 13"><path d="M.5 6h8v6.500h-8z" fill="#999" stroke="#777" /><path d="M2 6V3.500a2.500 2.500 0 0 1 5 0V6" stroke="#777" strokeWidth="1.200" /></Icon>
        </button>
      </div>
      <div className="min-h-0 flex-1 border border-[#bdbdbd] bg-[#e6e6e6]">
        <div className="mr-[18px] flex h-[70px] items-center border-b border-[#a9b8c8] bg-[#b0d5ff] pr-1 pl-[21px]">
          <div className="flex h-[67px] w-16 shrink-0 items-center justify-center border border-[#aaa] bg-[#cdcdcd]">
            <span className="flex h-[19px] w-[18px] items-center justify-center border border-[#eee] bg-[#888] font-['Liberation_Serif',serif] text-[18px] font-bold text-black outline outline-[#999]">T</span>
          </div>
          <span className="ml-1 flex-1 whitespace-nowrap">(Pellentesque nec lectu...</span>
          <label className="flex h-[13px] w-3 items-center justify-center rounded-[2px] border border-[#333]">
            <input type="checkbox" defaultChecked aria-label="Calque visible" className="peer sr-only" />
            <Check className="hidden h-[10px] w-[10px] peer-checked:block" strokeWidth={3} />
          </label>
        </div>
      </div>
      <div className="flex h-6 shrink-0 items-center bg-[#f0f0f0] pr-2 pl-[5px]">
        <button aria-label="Calques" className="flex h-[21px] w-[21px] items-center justify-center bg-[#dedede]">
          <Icon size="h-[17px] w-[17px]" box="0 0 17 17"><path d="M1 12l7.500 4 7.500-4M1 10l7.500 4L16 10M1 8l7.500 4L16 8M1 3.500L8.500 0 16 3.500" stroke="#999" strokeWidth="1.100" /><path d="M8.500 2.500L16 6 8.500 9.500 1 6z" fill="#fff" stroke="#666" /></Icon>
        </button>
        <button aria-label="Masque" className="ml-[71px] flex h-[15px] w-4 items-center justify-center border border-[#555] bg-white"><span className="h-2 w-2 rounded-full bg-[#333]" /></button>
        <button aria-label="Réglage" className="ml-2">
          <Icon size="h-[13px] w-3" box="0 0 12 13"><circle cx="6" cy="6.500" r="5.300" fill="#fff" stroke="#444" strokeWidth="1.300" /><path d="M2 10.500A5.300 5.300 0 0 1 9.800 2.500z" fill="#444" /></Icon>
        </button>
        <button aria-label="Effets" className="ml-[9px] font-['Liberation_Serif',serif] text-[17px] leading-4 text-[#333] italic">fx</button>
        <button aria-label="Nouveau calque" className="ml-auto">
          <Icon size="h-[14px] w-[11px]" box="0 0 11 14"><path d="M.7.7h6l3.500 3.500v9H.7zM6.500 1v3.500H10" fill="#fff" stroke="#777" /></Icon>
        </button>
        <button aria-label="Supprimer le calque" className="ml-3"><TrashIcon /></button>
      </div>
    </section>
  );
}

function Field({ label, value, select }: { label: string; value: string; select?: boolean }) {
  return (
    <div className="flex items-center justify-end gap-1">
      <label htmlFor={`field-${label}`}>{label}:</label>
      {select ? (
        <div className="relative flex h-[21px] w-[65px] items-center rounded-[2px] border border-[#a9a9a9] bg-white">
          <select id={`field-${label}`} className="h-full w-full appearance-none bg-transparent pl-[5px] outline-none"><option>{value}</option></select>
          <Caret className="pointer-events-none absolute right-1" />
        </div>
      ) : (
        <input id={`field-${label}`} defaultValue={value} className="h-[21px] w-[65px] rounded-[2px] border border-[#a9a9a9] bg-white pl-[5px] outline-none" />
      )}
    </div>
  );
}

function TransformPanel() {
  return (
    <section className="flex h-[134px] shrink-0 flex-col bg-[#f0f0f0]">
      <PanelTabs tabs={["Transformer", "Historique", "Navigateur"]} active="Transformer" menu={false} />
      <div className="flex items-start pt-[13px] pl-[21px]">
        <svg viewBox="0 0 40 42" className="mt-[6px] h-[42px] w-10" aria-hidden="true">
          <path d="M5.500 6.500h30v31h-30z" fill="#fff" stroke="#9cc8f5" strokeWidth="2" />
          <path d="M17.500 4h6v6h-6zM33 4h6v6h-6zM2.500 19h6v6h-6zM17.500 19h6v6h-6zM33 19h6v6h-6zM2.500 35h6v6h-6zM17.500 35h6v6h-6zM33 35h6v6h-6z" fill="#3f98f5" />
          <path d="M1 2h9v9H1z" fill="#1550f5" />
        </svg>
        <div className="ml-2 grid w-[178px] grid-cols-2 gap-x-[2px] gap-y-1 pl-1">
          <Field label="X" value="19,4 mm" />
          <Field label="L" value="136,1 mm" />
          <Field label="Y" value="17,5 mm" />
          <Field label="H" value="141,1 mm" />
          <div className="pt-[6px]"><Field label="R" value="0 °" select /></div>
          <div className="pt-[6px]"><Field label="S" value="0 °" select /></div>
        </div>
        <button aria-label="Verrouiller les proportions" className="mt-4 ml-[6px]">
          <Icon size="h-[15px] w-[6px]" box="0 0 6 15"><rect x="1" y="0.5" width="4" height="5" rx="2" stroke="#888" /><rect x="1" y="9.5" width="4" height="5" rx="2" stroke="#888" /><path d="M3 4v7" stroke="#888" /></Icon>
        </button>
      </div>
    </section>
  );
}

function StatusBar() {
  return (
    <footer className="flex h-[26px] shrink-0 items-center bg-[#e6e6e6] pt-[2px] pl-[7px] whitespace-nowrap">
      <button aria-label="Première page"><Icon size="h-[11px] w-[10px]" box="0 0 10 11"><path d="M.7 0v11" stroke="#999" strokeWidth="1.200" /><path d="M10 0v11L2 5.500z" fill="#999" /></Icon></button>
      <button aria-label="Page précédente" className="ml-[9px]"><Icon size="h-[11px] w-2" box="0 0 8 11"><path d="M8 0v11L0 5.500z" fill="#999" /></Icon></button>
      <span className="ml-[29px] w-[61px]">1 sur 2</span>
      <button aria-label="Page suivante"><Icon size="h-[11px] w-2" box="0 0 8 11"><path d="M0 0v11l8-5.500z" fill="#444" /></Icon></button>
      <button aria-label="Dernière page" className="ml-[9px]"><Icon size="h-[11px] w-[11px]" box="0 0 11 11"><path d="M0 0v11l8-5.500z" fill="#444" /><path d="M10 0v11" stroke="#444" strokeWidth="1.300" /></Icon></button>
      <button aria-label="Navigation" className="ml-[9px]"><Icon size="h-[15px] w-3" box="0 0 12 15"><path d="M2 2.500h9.500V14H2z" fill="#ddd" stroke="#999" /><path d="M.5.500h9V13h-9z" fill="#eee" stroke="#888" /><path d="M2 3h6M2 5h6M2 7h6M2 9h6" stroke="#999" /></Icon></button>
      <Icon size="ml-[15px] h-[13px] w-[13px]" box="0 0 13 13"><path d="M2 12V6c0-7 9-7 9 0v6z" fill="#2dae63" /><path d="M0 11.500h13V13H0z" fill="#777" /></Icon>
      <p className="ml-[13px]">
        "Pellentesque nec lectus n" sélectionné(s). <b>Glisser</b> pour déplacer la sélection. <b>Cliquer</b> sur un autre objet pour le sélectionner. <b>Cliquer</b> sur une zone vide pour annuler la sélection.
      </p>
    </footer>
  );
}

export default function App() {
  return (
    <div className="flex h-screen flex-col overflow-hidden bg-[#e6e6e6] font-['Lato','Open_Sans',sans-serif] text-[12px] leading-4 text-[#1e1e1e]">
      <MenuBar />
      <ToolBar />
      <ContextBar />
      <div className="flex min-h-0 flex-1">
        <ToolPalette />
        <PagesPanel />
        <DocumentArea />
        <aside className="flex w-[270px] shrink-0 flex-col">
          <SwatchesPanel />
          <LayersPanel />
          <TransformPanel />
        </aside>
      </div>
      <StatusBar />
    </div>
  );
}
